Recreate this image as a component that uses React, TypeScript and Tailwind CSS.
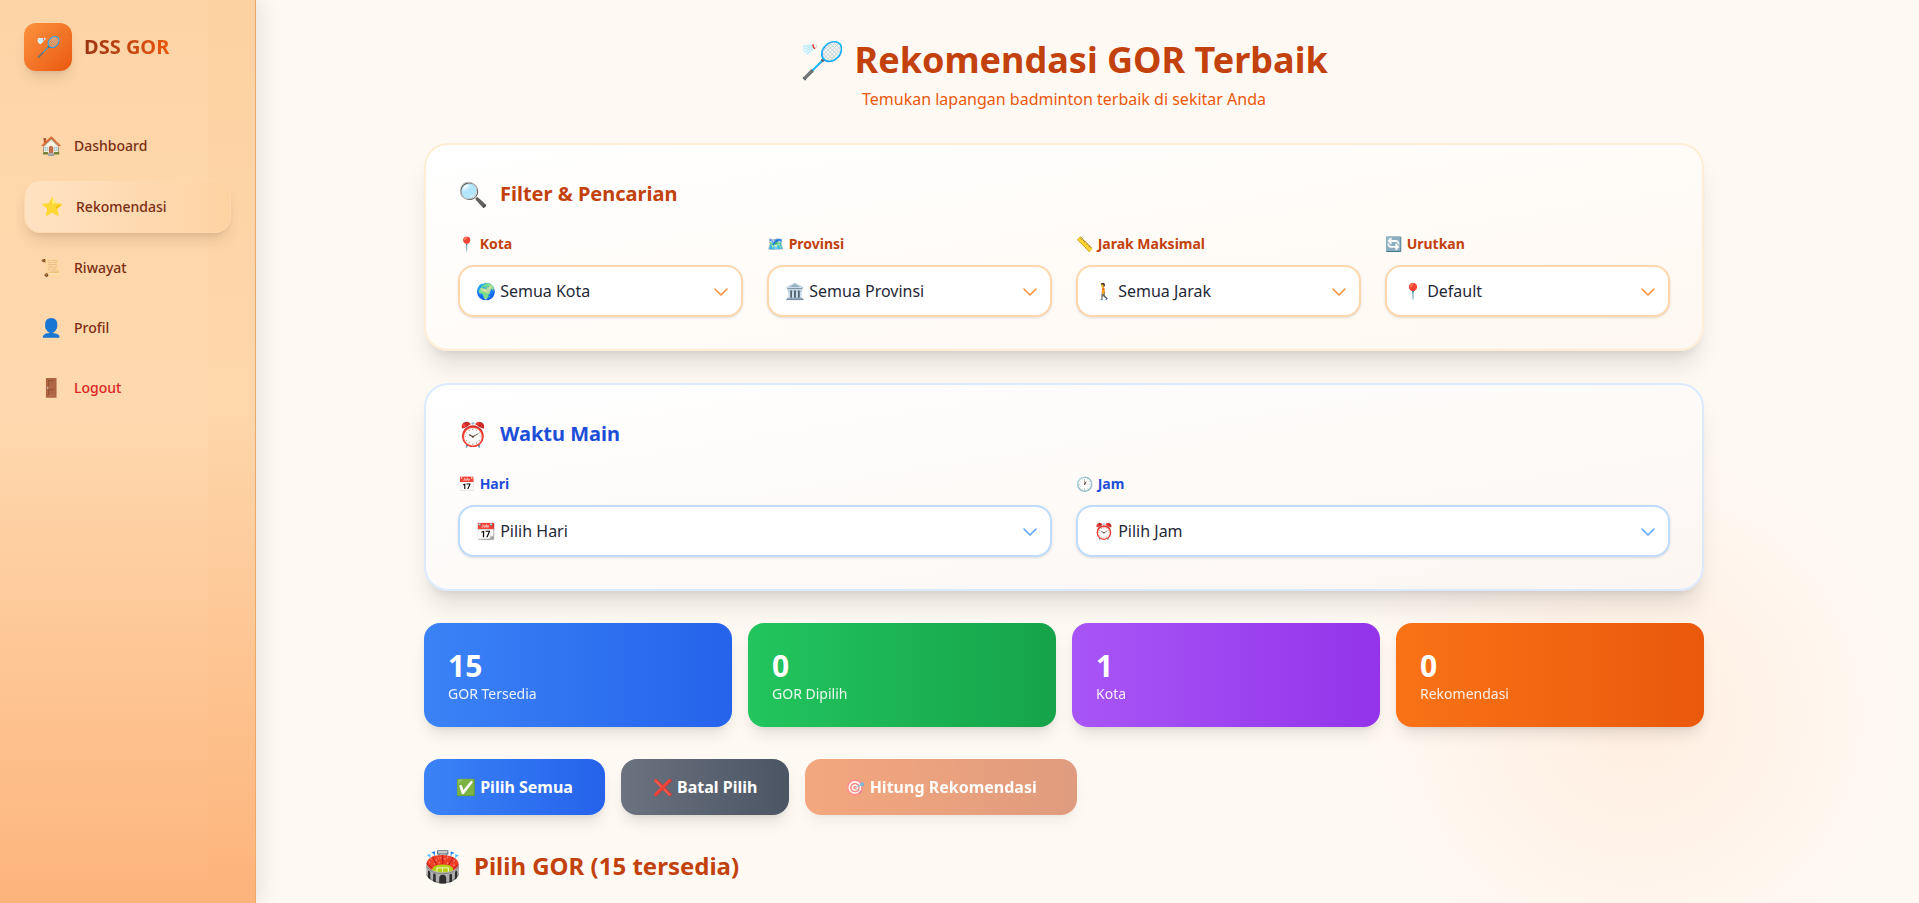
import React from "react";

function Chevron({ color }: { color: string }) {
  return (
    <svg width="24" height="24" viewBox="0 0 24 24" fill="none" className="absolute right-[8px] top-[13px]">
      <path d="M6 9l6 6 6-6" stroke={color} strokeWidth="1.6" strokeLinecap="round" strokeLinejoin="round" />
    </svg>
  );
}

function Field({ icon, label, value, blue }: { icon: string; label: string; value: string; blue?: boolean }) {
  return (
    <div className="flex flex-col">
      <label className={`text-[14px] leading-[20px] font-bold mb-[11px] ${blue ? "text-[#1d4ed8]" : "text-[#c2410c]"}`}>
        {icon} <span className="ml-[1px]">{label}</span>
      </label>
      <div className={`relative h-[52px] rounded-[16px] border-2 bg-white pl-[16px] flex items-center text-[16px] text-[#1f2937] shadow-sm ${blue ? "border-[#bfdbfe]" : "border-[#fed7aa]"}`}>
        {value}
        <Chevron color={blue ? "#60a5fa" : "#fb923c"} />
      </div>
    </div>
  );
}

function Nav({ icon, label, active, red }: { icon: string; label: string; active?: boolean; red?: boolean }) {
  if (active)
    return (
      <div className="h-[53px] mx-[24px] -mt-[3px] -mb-[4px] rounded-[16px] border border-[#fed7aa] bg-gradient-to-r from-[#ffe2c2] to-[#fed3a3] shadow-lg flex items-center pl-[16px] text-[14px] font-medium text-[#7c2d12]">
        <span className="w-[22px] text-[18px] text-center mr-[13px]">{icon}</span>
        {label}
      </div>
    );
  return (
    <div className={`h-[44px] mx-[25px] flex items-center pl-[15px] text-[14px] font-medium ${red ? "text-[#dc2626]" : "text-[#7c2d12]"}`}>
      <span className="w-[22px] text-[18px] text-center mr-[12px]">{icon}</span>
      {label}
    </div>
  );
}

function Stat({ n, l, cls }: { n: string; l: string; cls: string }) {
  return (
    <div className={`h-[104px] rounded-[16px] px-[24px] pt-[25px] text-white shadow-lg bg-gradient-to-r ${cls}`}>
      <div className="text-[30px] leading-[36px] font-bold">{n}</div>
      <div className="text-[14px] leading-[20px] opacity-90">{l}</div>
    </div>
  );
}

export default function App() {
  return (
    <div
      className="h-[903px] overflow-hidden flex bg-[#fff9f3]"
      style={{ fontFamily: '"Noto Sans", sans-serif' }}
    >
      <aside className="relative z-10 w-[256px] shrink-0 h-full border-r border-[#f0a868] shadow-[8px_0_16px_rgba(0,0,0,0.07)] bg-[linear-gradient(90deg,transparent_0,transparent_208px,rgba(250,170,90,0.05)_208px),linear-gradient(180deg,#fdd4a6_0%,#fed9af_45%,#fdb47c_100%)]">
        <div className="flex items-center pl-[24px] pt-[23px] gap-[12px]">
          <div className="w-[48px] h-[48px] rounded-[12px] bg-gradient-to-br from-[#fb923c] to-[#ea580c] shadow-lg flex items-center justify-center text-[20px]">🏸</div>
          <span className="text-[20px] font-bold bg-gradient-to-r from-[#9a3412] to-[#ea580c] bg-clip-text text-transparent">DSS GOR</span>
        </div>
        <nav className="mt-[52px] flex flex-col gap-[16px]">
          <Nav icon="🏠" label="Dashboard" />
          <Nav icon="⭐" label="Rekomendasi" active />
          <Nav icon="📜" label="Riwayat" />
          <Nav icon="👤" label="Profil" />
          <Nav icon="🚪" label="Logout" red />
        </nav>
      </aside>
      <main className="flex-1 min-w-0 pl-[168px] bg-[radial-gradient(circle_at_1380px_716px,#ffeee0_0,#fff3e9_130px,#fff9f3_280px,rgba(255,250,245,0)_420px)]">
        <div className="w-[1280px]">
          <header className="text-center pt-[32px] h-[143px]">
            <h1 className="text-[36px] leading-[56px] font-bold text-[#c2410c]">🏸 Rekomendasi GOR Terbaik</h1>
            <p className="text-[16px] leading-[24px] text-[#ea580c] -mt-[1px]">Temukan lapangan badminton terbaik di sekitar Anda</p>
          </header>

          <section className="h-[208px] rounded-[24px] border-2 border-[#ffedd5] bg-gradient-to-br from-white to-[#fff8f1] shadow-xl px-[32px] pt-[31px]">
            <h2 className="text-[20px] leading-[36px] font-bold text-[#c2410c] flex items-center gap-[12px] mb-[22px]">
              <span className="text-[24px] leading-[36px]">🔍</span>Filter &amp; Pencarian
            </h2>
            <div className="grid grid-cols-4 gap-[24px]">
              <Field icon="📍" label="Kota" value="🌍 Semua Kota" />
              <Field icon="🗺️" label="Provinsi" value="🏛️ Semua Provinsi" />
              <Field icon="📏" label="Jarak Maksimal" value="🚶 Semua Jarak" />
              <Field icon="🔄" label="Urutkan" value="📍 Default" />
            </div>
          </section>

          <section className="h-[208px] mt-[32px] rounded-[24px] border-2 border-[#dbeafe] bg-gradient-to-br from-white to-[#fcf6f2] shadow-xl px-[32px] pt-[31px]">
            <h2 className="text-[20px] leading-[36px] font-bold text-[#1d4ed8] flex items-center gap-[12px] mb-[22px]">
              <span className="text-[24px] leading-[36px]">⏰</span>Waktu Main
            </h2>
            <div className="grid grid-cols-2 gap-[24px]">
              <Field blue icon="📅" label="Hari" value="📆 Pilih Hari" />
              <Field blue icon="🕐" label="Jam" value="⏰ Pilih Jam" />
            </div>
          </section>

          <div className="grid grid-cols-4 gap-[16px] mt-[32px]">
            <Stat n="15" l="GOR Tersedia" cls="from-[#3b82f6] to-[#2563eb]" />
            <Stat n="0" l="GOR Dipilih" cls="from-[#22c55e] to-[#16a34a]" />
            <Stat n="1" l="Kota" cls="from-[#a855f7] to-[#9333ea]" />
            <Stat n="0" l="Rekomendasi" cls="from-[#f97316] to-[#ea580c]" />
          </div>

          <div className="flex gap-[16px] mt-[32px]">
            <button className="h-[56px] px-[32px] rounded-[16px] text-white font-bold text-[16px] shadow-lg bg-gradient-to-r from-[#3b82f6] to-[#2563eb]">✅ Pilih Semua</button>
            <button className="h-[56px] px-[32px] rounded-[16px] text-white font-bold text-[16px] shadow-lg bg-gradient-to-r from-[#6b7280] to-[#4b5563]">❌ Batal Pilih</button>
            <button className="h-[56px] px-[40px] rounded-[16px] text-white font-bold text-[16px] shadow-lg bg-gradient-to-r from-[#ea580c] to-[#c2410c] opacity-50">🎯 Hitung Rekomendasi</button>
          </div>

          <h2 className="mt-[33px] text-[24px] leading-[32px] font-bold text-[#c2410c] flex items-center gap-[13px]">
            <span className="text-[30px] leading-[36px]">🏟️</span>Pilih GOR (15 tersedia)
          </h2>
        </div>
      </main>
    </div>
  );
}
